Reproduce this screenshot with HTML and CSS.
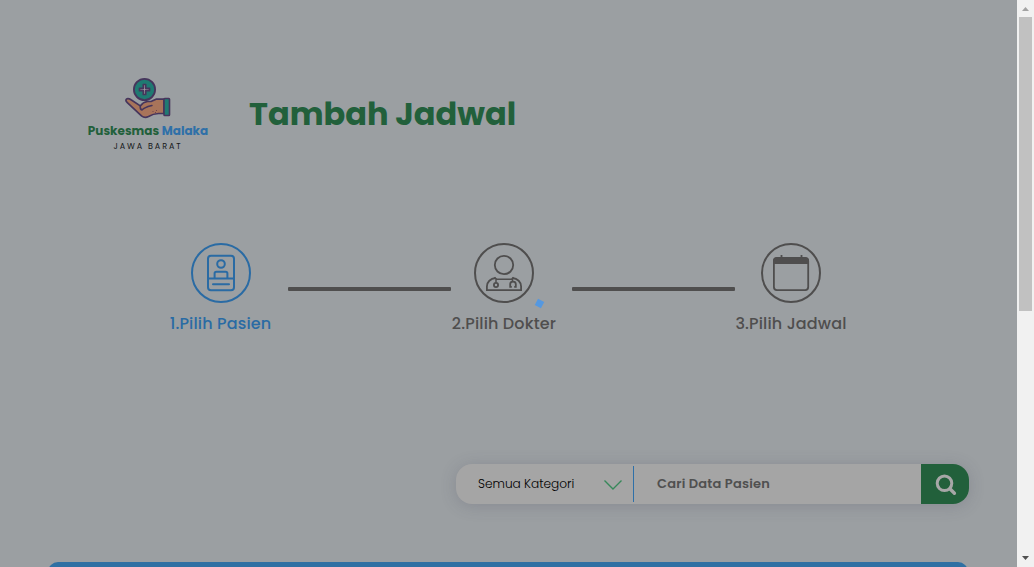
FILE: index.html
```html
<!DOCTYPE html>
<html lang="id">
<head>
<meta charset="utf-8">
<title>Tambah Jadwal</title>
<link rel="stylesheet" href="styles.css">
</head>
<body>
<div class="window">
  <main class="page">
    <header class="header">
      <div class="brand">
        <svg class="brand-logo" viewBox="0 0 48 42" width="48" height="42">
          <circle cx="20.5" cy="12.5" r="10.6" fill="#1f7a72" stroke="#46355c" stroke-width="1.8"/>
          <path d="M19.300 7.500h2.400v3.800h3.800v2.400h-3.800v3.800h-2.400v-3.800h-3.800v-2.400h3.800z" fill="#a09aa0" stroke="#46355c" stroke-width="1.700" stroke-linejoin="round"/>
          <path d="M2.400 22.200c1.600-1.500 3.200-.4 4.600.6l9.300 6.100c2-2.800 4.500-4 7.200-4.400l4-.2 4.500-2.100h8v14.300h-5.500c-4 .2-7.500 1.500-10 3-2.500 1.200-5 .9-7-.6L3.300 25.600c-1.300-1.200-1.700-2.500-.9-3.400z" fill="#a8745a" stroke="#46355c" stroke-width="1.700" stroke-linejoin="round"/>
          <path d="M16.300 29c-.3 2 .2 3.500 1.700 4 3-3 6-3.500 10-4.500" fill="none" stroke="#46355c" stroke-width="1.500" stroke-linecap="round"/>
          <path d="M28.500 34.500h1M32 33.500h1M31 35.500h1" stroke="#70434c" stroke-width="1"/>
          <rect x="40" y="21.500" width="5.500" height="17" rx=".7" fill="#1f7a72" stroke="#46355c" stroke-width="1.600"/>
        </svg>
        <div class="brand-name">Puskesmas <span class="brand-accent">Malaka</span></div>
        <div class="brand-region">JAWA BARAT</div>
      </div>
      <h1 class="title">Tambah Jadwal</h1>
    </header>

    <section class="steps">
      <div class="step step-patient">
        <div class="step-icon">
          <svg viewBox="0 0 60 60" width="60" height="60" fill="none" stroke="currentColor" stroke-width="2">
            <rect x="17" y="12.700" width="26" height="34.600" rx="3"/>
            <circle cx="30" cy="21" r="3.800"/>
            <path d="M23.600 35v-4.500q0-1.800 1.800-1.800h9.200q1.800 0 1.800 1.800V35M17 35.400h26"/>
            <path d="M22 41.300h16" stroke-linecap="round"/>
          </svg>
        </div>
        <div class="step-label">1.Pilih Pasien</div>
      </div>
      <div class="step-line"></div>
      <div class="step step-doctor">
        <div class="step-icon">
          <svg viewBox="0 0 60 60" width="60" height="60" fill="none" stroke="currentColor" stroke-width="1.800">
            <circle cx="30" cy="22" r="9.200"/>
            <path d="M21.500 35c-5 .5-8.600 4-8.600 8.500v3.700h34.200v-3.700c0-4.500-3.600-8-8.600-8.500"/>
            <path d="M20.500 34.400l2 1.800h15l2-1.800M22 35v4.500M38.500 35v4" stroke-width="1.500"/>
            <circle cx="22" cy="42" r="2.100"/>
            <path d="M37.800 43.800h-1.600V41c0-3.300 5.600-3.300 5.600 0v2.800h-1.600"/>
          </svg>
        </div>
        <div class="step-label">2.Pilih Dokter</div>
        <span class="loader-dot"></span>
      </div>
      <div class="step-line step-line-last"></div>
      <div class="step step-schedule">
        <div class="step-icon">
          <svg viewBox="0 0 60 60" width="60" height="60" fill="none" stroke="currentColor" stroke-width="1.800">
            <rect x="12.900" y="15" width="34.300" height="32.100" rx="3"/>
            <path d="M12 21v-3q0-3.500 3.500-3.500h29q3.500 0 3.500 3.500v3z" fill="currentColor" stroke="none"/>
            <path d="M20.500 12v4M40.500 12v4"/>
          </svg>
        </div>
        <div class="step-label">3.Pilih Jadwal</div>
      </div>
    </section>

    <form class="search">
      <div class="category">
        <span class="category-text">Semua Kategori</span>
        <svg class="chevron" viewBox="0 0 20 12" width="20" height="12" fill="none" stroke="#37885a" stroke-width="1.400"><path d="M1.500 1.500L10 10l8.500-8.500"/></svg>
      </div>
      <div class="query"><span class="query-text">Cari Data Pasien</span></div>
      <div class="submit">
        <svg viewBox="0 0 22 22" width="22" height="22" fill="none" stroke="#a7a7a7"><circle cx="9.500" cy="9.300" r="7.300" stroke-width="3"/><path d="M14.900 14.800l4.500 4.500" stroke-width="3.400" stroke-linecap="round"/></svg>
      </div>
    </form>

    <div class="table-head"></div>
  </main>
  <div class="scrollbar">
    <svg class="arrow" viewBox="0 0 17 17" width="17" height="17"><path d="M5 11h7L8.500 7z" fill="#a3a3a3"/></svg>
    <div class="thumb"></div>
    <svg class="arrow arrow-down" viewBox="0 0 17 17" width="17" height="17"><path d="M5 6h7L8.500 10z" fill="#505050"/></svg>
  </div>
</div>
</body>
</html>
```
FILE: styles.css
```css
* { box-sizing: border-box; }
body { margin: 0; overflow: hidden; font-family: Poppins, Inter, sans-serif; }
.window { display: flex; width: 1034px; height: 567px; }
.page {
  width: 1017px;
  height: 567px;
  overflow: hidden;
  background: #9b9fa2;
  color: #22603b;
}
.header { display: flex; height: 243px; padding: 77px 0 0 87px; }
.brand { width: 122px; display: flex; flex-direction: column; align-items: center; white-space: nowrap; }
.brand-logo { display: block; }
.brand-name { font-size: 12px; line-height: 24px; font-weight: 700; }
.brand-accent { color: #2f70a8; }
.brand-region { font-size: 8px; line-height: 8px; letter-spacing: 1.900px; color: #17191a; }
.title { margin: 12px 0 0 40px; font-size: 32px; line-height: 50px; font-weight: 700; white-space: nowrap; }

.steps { display: flex; height: 221px; padding-left: 170px; }
.step { position: relative; display: flex; flex-direction: column; align-items: center; color: #4f4e4e; white-space: nowrap; }
.step-patient { width: 101px; color: #2a6ba4; }
.step-doctor { width: 106px; }
.step-schedule { width: 112px; }
.step-icon { width: 60px; height: 60px; border: 2px solid currentColor; border-radius: 50%; }
.step-icon svg { display: block; margin: -2px; }
.step-label { margin-top: 9px; font-size: 16px; line-height: 24px; font-weight: 500; letter-spacing: .15px; }
.step-line { width: 163px; height: 4px; margin: 44px 0 0 17px; background: #4f4e4e; border-radius: 1px; }
.step-line-last { margin-left: 15px; }
.loader-dot { position: absolute; left: 85px; top: 57px; width: 7px; height: 7px; background: #5598e0; transform: rotate(28deg); }

.search {
  display: flex;
  width: 513px;
  height: 40px;
  margin-left: 456px;
  border-radius: 16px;
  background: #a5a5a5;
  box-shadow: 0 2px 16px rgba(70, 70, 90, .22);
}
.category { display: flex; align-items: center; justify-content: space-between; width: 178px; height: 36px; margin-top: 2px; padding: 0 10px 0 22px; border-right: 1px solid #2f70a8; font-size: 12.150px; font-weight: 300; color: #000; white-space: nowrap; }
.chevron { margin-top: 2px; }
.query { flex: 1; padding-left: 23px; font-size: 13px; letter-spacing: .2px; line-height: 39px; font-weight: 600; color: #505050; }
.submit { display: flex; align-items: center; justify-content: center; width: 48px; padding: 2px 0 0 2px; background: #22603b; border-radius: 0 16px 16px 0; }
.table-head { width: 920px; height: 50px; margin: 58px 0 0 48px; background: #2f70a3; border-radius: 10px 10px 0 0; }

.scrollbar { display: flex; flex-direction: column; align-items: center; width: 17px; background: #f1f1f1; }
.arrow { display: block; }
.thumb { width: 13px; height: 294px; background: #c1c1c1; }
.arrow-down { margin-top: auto; }
```
